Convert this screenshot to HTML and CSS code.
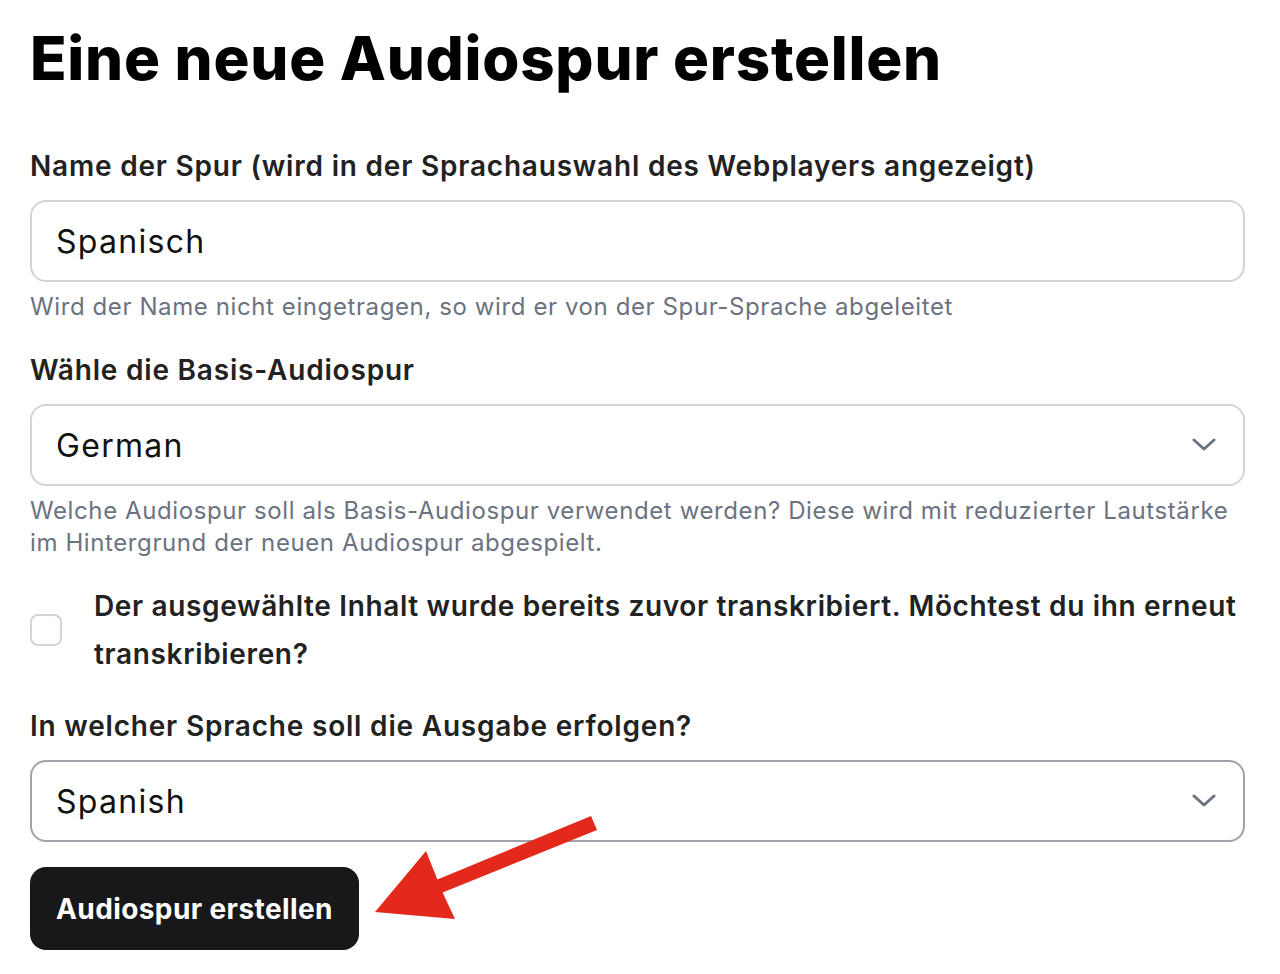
FILE: index.html
```html
<!DOCTYPE html>
<html lang="de">
<head>
    <meta charset="UTF-8">
    <meta name="viewport" content="width=device-width, initial-scale=1.0">
    <title>Eine neue Audiospur erstellen</title>
    <link rel="stylesheet" href="styles.css">
</head>
<body>
    <div class="page">
        <h1 class="title">Eine neue Audiospur erstellen</h1>

        <form class="track-form">
            <div class="field">
                <label class="field-label" for="trackName">Name der Spur (wird in der Sprachauswahl des Webplayers angezeigt)</label>
                <input class="text-input" id="trackName" type="text" value="Spanisch">
                <p class="hint">Wird der Name nicht eingetragen, so wird er von der Spur-Sprache abgeleitet</p>
            </div>

            <div class="field">
                <label class="field-label" for="baseTrack">Wähle die Basis-Audiospur</label>
                <div class="select-wrap">
                    <select class="select-input" id="baseTrack">
                        <option>German</option>
                    </select>
                    <svg class="chevron" width="24" height="24" viewBox="0 0 24 24"><path d="M2 7 L12 16 L22 7" fill="none" stroke="#6b7280" stroke-width="3" stroke-linecap="round" stroke-linejoin="round"/></svg>
                </div>
                <p class="hint">Welche Audiospur soll als Basis-Audiospur verwendet werden? Diese wird mit reduzierter Lautstärke im Hintergrund der neuen Audiospur abgespielt.</p>
            </div>

            <div class="check-row">
                <input class="checkbox" id="retranscribe" type="checkbox">
                <label class="check-label" for="retranscribe">Der ausgewählte Inhalt wurde bereits zuvor transkribiert. Möchtest du ihn erneut transkribieren?</label>
            </div>

            <div class="field">
                <label class="field-label" for="outputLang">In welcher Sprache soll die Ausgabe erfolgen?</label>
                <div class="select-wrap">
                    <select class="select-input focused" id="outputLang">
                        <option>Spanish</option>
                    </select>
                    <svg class="chevron" width="24" height="24" viewBox="0 0 24 24"><path d="M2 7 L12 16 L22 7" fill="none" stroke="#6b7280" stroke-width="3" stroke-linecap="round" stroke-linejoin="round"/></svg>
                </div>
            </div>

            <button class="submit-btn" type="button">Audiospur erstellen</button>
        </form>

        <!-- annotation arrow -->
        <svg class="annotation" width="1280" height="974" viewBox="0 0 1280 974">
            <polygon points="591,816 597,830 442.6,892.5 455,919 375,912 426,851 437.4,879.5" fill="#e2291c"/>
        </svg>
    </div>
</body>
</html>
```

FILE: styles.css
```css
* {
    box-sizing: border-box;
}

body {
    margin: 0;
    background-color: #fff;
    font-family: "Inter", "Liberation Sans", sans-serif;
    color: #222;
}

.page {
    position: relative;
    padding: 22px 35px 0 30px;
    min-height: 974px;
}

.title {
    margin: 0;
    font-size: 60px;
    line-height: 72px;
    font-weight: 800;
    color: #000;
    letter-spacing: 0.75px;
}

.track-form {
    display: flex;
    flex-direction: column;
}

.field {
    display: flex;
    flex-direction: column;
}

.field-label {
    display: block;
    font-size: 28px;
    line-height: 40px;
    font-weight: 600;
    color: #222;
    letter-spacing: 0.8px;
    margin-bottom: 14px;
}

.title + .track-form .field:first-child .field-label {
    margin-top: 52px;
}

.text-input,
.select-input {
    width: 100%;
    height: 82px;
    padding: 0 24px;
    border: 2px solid #d4d4d8;
    border-radius: 16px;
    font-family: inherit;
    font-size: 32px;
    letter-spacing: 1.3px;
    color: #111;
    background-color: #fff;
    outline: none;
}

.select-wrap {
    position: relative;
}

.select-input {
    appearance: none;
    -webkit-appearance: none;
}

.select-input.focused {
    border-color: #a1a1aa;
}

.chevron {
    position: absolute;
    right: 29px;
    top: 29px;
    pointer-events: none;
}

.hint {
    margin: 9px 0 0;
    font-size: 24px;
    line-height: 32px;
    letter-spacing: 0.6px;
    color: #6b7280;
}

.field + .field .field-label {
    margin-top: 27px;
}

.check-row {
    display: flex;
    align-items: center;
    gap: 32px;
    margin-top: 23px;
}

.checkbox {
    appearance: none;
    -webkit-appearance: none;
    flex: none;
    width: 32px;
    height: 32px;
    margin: 0;
    border: 2px solid #d4d4d8;
    border-radius: 8px;
    background-color: #fff;
}

.check-label {
    font-size: 28px;
    line-height: 48px;
    font-weight: 600;
    letter-spacing: 0.65px;
    color: #222;
}

.check-row + .field .field-label {
    margin-top: 28px;
}

.submit-btn {
    align-self: flex-start;
    margin-top: 25px;
    height: 83px;
    padding: 0 26px;
    border: none;
    border-radius: 16px;
    background-color: #18181b;
    color: #fff;
    font-family: inherit;
    font-size: 28px;
    font-weight: 700;
    letter-spacing: 0.4px;
}

.annotation {
    position: absolute;
    left: 0;
    top: 0;
    pointer-events: none;
}
```
